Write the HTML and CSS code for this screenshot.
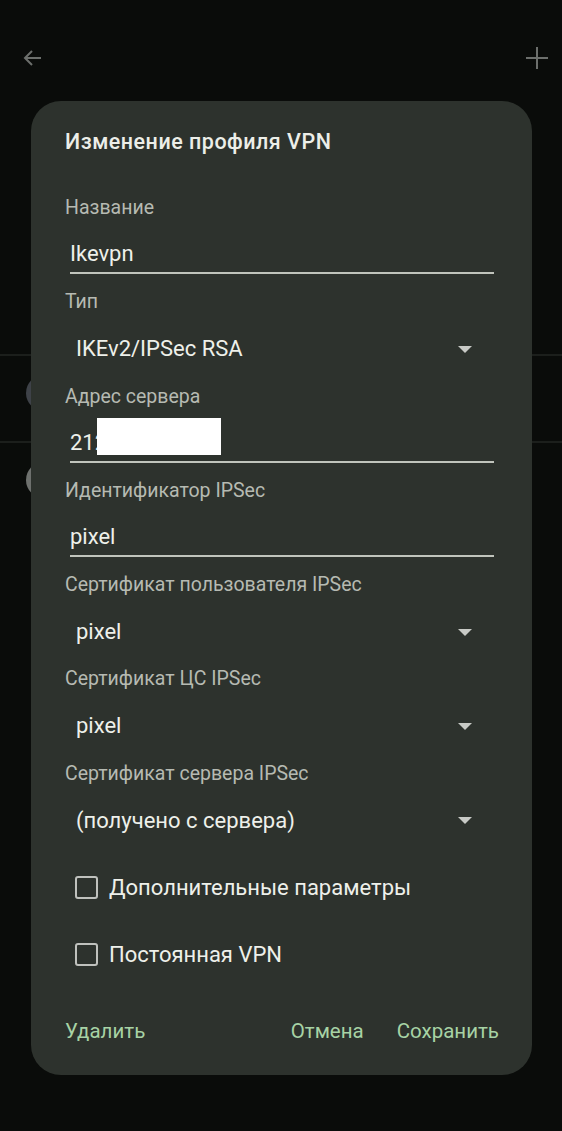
FILE: index.html
```html
<!DOCTYPE html>
<html lang="ru">
<head>
    <meta charset="utf-8">
    <title>VPN</title>
    <link rel="stylesheet" href="styles.css">
</head>
<body>
    <div class="page">
        <div class="appbar">
            <svg class="icon" viewBox="0 0 24 24"><path d="M20 12H5M11 5l-7 7 7 7" fill="none" stroke="currentColor" stroke-width="2"/></svg>
            <svg class="icon" viewBox="0 0 24 24"><path d="M12 1v22M1 12h22" fill="none" stroke="currentColor" stroke-width="2"/></svg>
        </div>
        <div class="bg-list">
            <div class="bg-row"></div>
            <div class="bg-row"><span class="bg-dot"></span></div>
            <div class="bg-row last"><span class="bg-dot light"></span></div>
        </div>
    </div>

    <div class="dialog">
        <h2 class="title">Изменение профиля VPN</h2>

        <div class="field">
            <div class="label">Название</div>
            <div class="edit">Ikevpn</div>
        </div>
        <div class="field">
            <div class="label">Тип</div>
            <div class="spinner">IKEv2/IPSec RSA<span class="arrow"></span></div>
        </div>
        <div class="field">
            <div class="label">Адрес сервера</div>
            <div class="edit">212<span class="redact"></span></div>
        </div>
        <div class="field">
            <div class="label">Идентификатор IPSec</div>
            <div class="edit">pixel</div>
        </div>
        <div class="field">
            <div class="label">Сертификат пользователя IPSec</div>
            <div class="spinner">pixel<span class="arrow"></span></div>
        </div>
        <div class="field">
            <div class="label">Сертификат ЦС IPSec</div>
            <div class="spinner">pixel<span class="arrow"></span></div>
        </div>
        <div class="field">
            <div class="label">Сертификат сервера IPSec</div>
            <div class="spinner">(получено с сервера)<span class="arrow"></span></div>
        </div>

        <div class="checks">
            <label class="check"><span class="box"></span>Дополнительные параметры</label>
            <label class="check"><span class="box"></span>Постоянная VPN</label>
        </div>

        <div class="actions">
            <span class="btn">Удалить</span>
            <span class="spacer"></span>
            <span class="btn">Отмена</span>
            <span class="btn">Сохранить</span>
        </div>
    </div>
</body>
</html>
```

FILE: styles.css
```css
body {
    margin: 0;
    background-color: #0a0c0a;
    font-family: Roboto, "Noto Sans", sans-serif;
    width: 562px;
    height: 1131px;
    overflow: hidden;
}

.page {
    height: 1131px;
}

.appbar {
    display: flex;
    justify-content: space-between;
    padding: 46px 13px 0 21px;
    color: #6c6f6c;
}

.icon {
    width: 24px;
    height: 24px;
}

.bg-list {
    margin-top: 199px;
}

.bg-row {
    height: 85px;
    border-bottom: 2px solid #1c1f1c;
    position: relative;
}

.bg-row.last {
    border-bottom: none;
}

.bg-dot {
    position: absolute;
    left: 26px;
    top: 19px;
    width: 36px;
    height: 36px;
    border-radius: 50%;
    background-color: #3e4248;
}

.bg-dot.light {
    background-color: #6e716e;
}

.dialog {
    position: fixed;
    left: 31px;
    top: 101px;
    width: 501px;
    height: 974px;
    box-sizing: border-box;
    background-color: #2d322d;
    border-radius: 30px;
    padding: 27px 38px 0 34px;
    color: #eef0ea;
}

.title {
    margin: 0 0 40px;
    font-size: 21.5px;
    line-height: 28px;
    font-weight: 500;
    letter-spacing: 0.5px;
    color: #eceee8;
}

.field {
    height: 94.3px;
}

.label {
    font-size: 19.5px;
    line-height: 24px;
    color: #b6bab2;
}

.edit {
    margin: 22px 0 0 5px;
    font-size: 22px;
    line-height: 24px;
    height: 24px;
    padding-bottom: 6px;
    border-bottom: 2px solid #c0c4bc;
    position: relative;
}

.spinner {
    margin: 23px 0 0 11px;
    font-size: 22px;
    line-height: 24px;
    display: flex;
    align-items: center;
    justify-content: space-between;
    padding-right: 22px;
}

.arrow {
    width: 0;
    height: 0;
    border-left: 7px solid transparent;
    border-right: 7px solid transparent;
    border-top: 7px solid #c8cac6;
}

.redact {
    position: absolute;
    left: 27px;
    top: -13px;
    width: 124px;
    height: 37px;
    background-color: #ffffff;
}

.checks {
    margin-top: -2px;
}

.check {
    display: flex;
    align-items: center;
    height: 67px;
    padding-left: 10px;
    font-size: 22px;
    color: #eef0ea;
}

.box {
    width: 19px;
    height: 19px;
    border: 2.5px solid #bfc1bd;
    border-radius: 3px;
    margin-right: 11px;
}

.actions {
    display: flex;
    margin-top: 31px;
    margin-right: -5px;
    font-size: 20.5px;
    line-height: 24px;
    color: #a7d3a5;
}

.spacer {
    flex: 1;
}

.btn {
    margin-left: 33px;
}

.btn:first-child {
    margin-left: 0;
}
```
